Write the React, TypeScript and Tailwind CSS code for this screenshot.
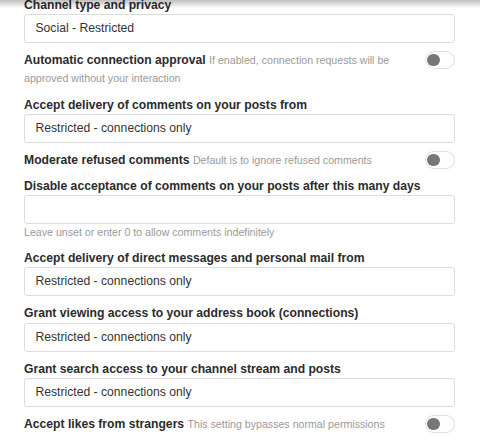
import React from 'react';

const font = { fontFamily: '"Liberation Sans", Arial, sans-serif' };

function Select({ value }: { value: string }) {
  return (
    <div className="h-[29px] w-full rounded-[3px] border border-[#dcdcdc] bg-white pl-[10.5px] text-[12.16px] leading-[27px] text-[#333]">
      {value}
    </div>
  );
}

function Switch() {
  return (
    <div className="ml-[13px] flex h-[18px] w-[30px] shrink-0 items-center rounded-full border border-[#dedede] bg-white pl-[1px]">
      <span className="h-[12px] w-[13px] rounded-full bg-[#767676]" />
    </div>
  );
}

function Field({ label, value, help }: { label: string; value: string; help?: string }) {
  return (
    <div className="flex flex-col">
      <label className="text-[12.16px] font-bold leading-[18.24px] text-[#2b2b2b]">{label}</label>
      <Select value={value} />
      {help && (
        <div className="mt-[1px] text-[10.64px] leading-[15.96px] text-[#9a9a9a]">{help}</div>
      )}
    </div>
  );
}

function Toggle({ label, help }: { label: string; help: string }) {
  return (
    <div className="flex items-start">
      <div className="flex-1 text-[12.16px] leading-[18.24px]">
        <span className="font-bold text-[#2b2b2b]">{label}</span>{' '}
        <span className="text-[10.64px] text-[#9a9a9a]">{help}</span>
      </div>
      <Switch />
    </div>
  );
}

const restricted = 'Restricted - connections only';

export default function App() {
  return (
    <div className="relative h-[440px] w-[480px] overflow-hidden bg-white" style={font}>
      {/* shadow of the fixed nav above */}
      <div className="pointer-events-none absolute inset-x-0 top-0 z-10 h-[8px] bg-gradient-to-b from-black/25 to-transparent" />

      <div className="-mt-[4.2px] flex flex-col gap-[8px] pl-[24px] pr-[25px]">
        <Field label="Channel type and privacy" value="Social - Restricted" />
        <Toggle
          label="Automatic connection approval"
          help="If enabled, connection requests will be approved without your interaction"
        />
        <Field label="Accept delivery of comments on your posts from" value={restricted} />
        <Toggle label="Moderate refused comments" help="Default is to ignore refused comments" />
        <Field
          label="Disable acceptance of comments on your posts after this many days"
          value=""
          help="Leave unset or enter 0 to allow comments indefinitely"
        />
        <Field label="Accept delivery of direct messages and personal mail from" value={restricted} />
        <Field label="Grant viewing access to your address book (connections)" value={restricted} />
        <Field label="Grant search access to your channel stream and posts" value={restricted} />
        <Toggle label="Accept likes from strangers" help="This setting bypasses normal permissions" />
      </div>
    </div>
  );
}
